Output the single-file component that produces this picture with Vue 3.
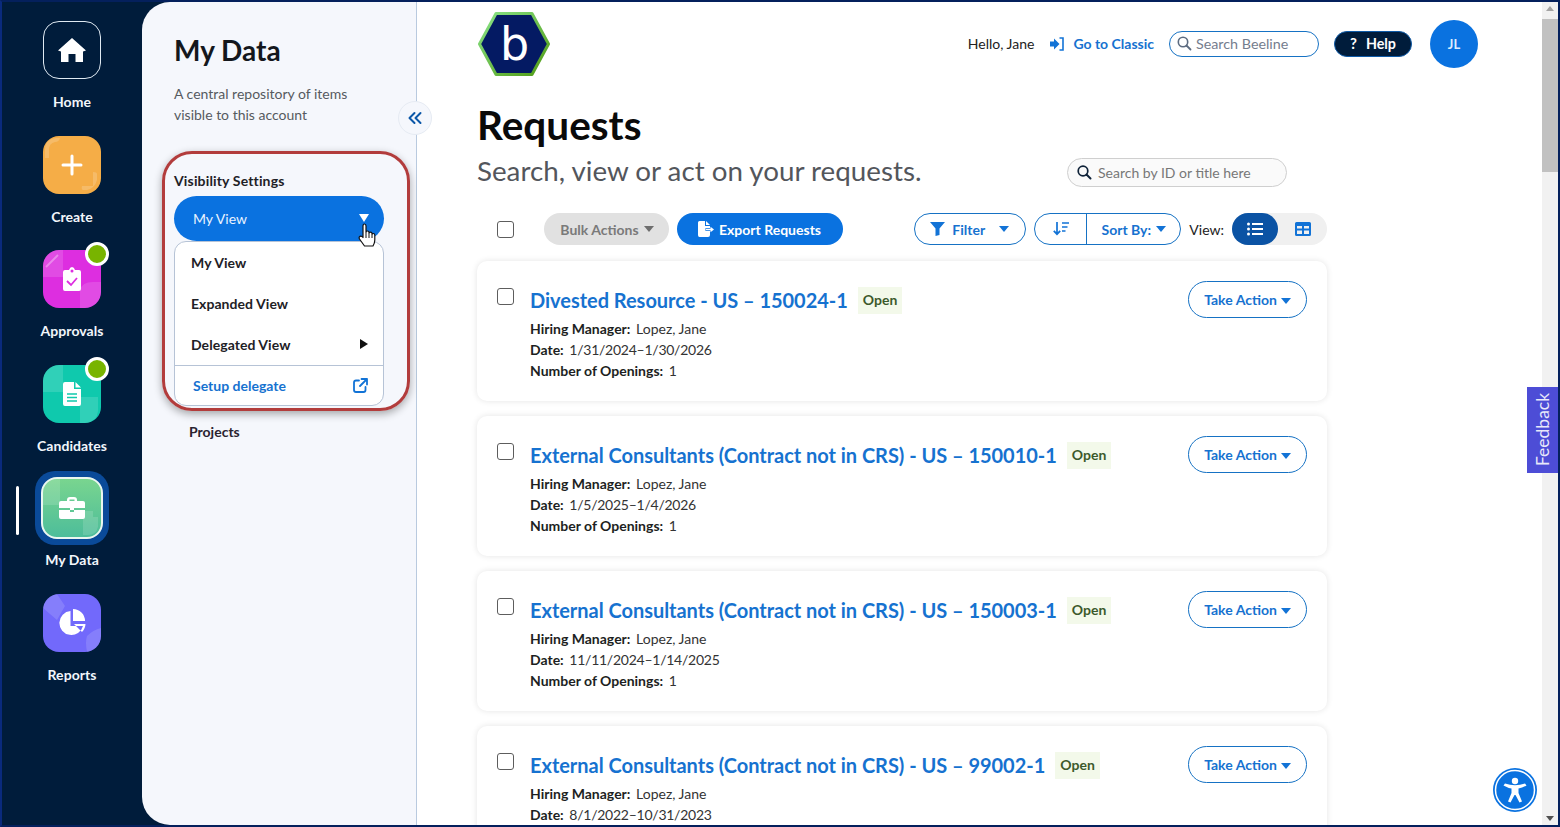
<script setup>
const cards = [
  { title: 'Divested Resource - US – 150024-1', date: '1/31/2024–1/30/2026', openings: true },
  { title: 'External Consultants (Contract not in CRS) - US – 150010-1', date: '1/5/2025–1/4/2026', openings: true },
  { title: 'External Consultants (Contract not in CRS) - US – 150003-1', date: '11/11/2024–1/14/2025', openings: true },
  { title: 'External Consultants (Contract not in CRS) - US – 99002-1', date: '8/1/2022–10/31/2023', openings: false },
]
</script>

<template>
  <div class="frame">
    <nav class="rail">
      <div class="nav-item">
        <div class="tile tile-home">
          <svg width="30" height="26" viewBox="0 0 30 26"><path fill="#fff" d="M15 1 L29 13.500 L26 14.500 L26 25 L18.500 25 L18.500 17 L11.500 17 L11.500 25 L4 25 L4 14.500 L1 13.500 Z"/></svg>
        </div>
        <span class="nav-label">Home</span>
      </div>
      <div class="nav-item">
        <div class="tile tile-create">
          <svg class="deco" width="58" height="58" viewBox="0 0 58 58"><path fill="#ffffff2e" d="M2 22V14Q2 3 13 2H17Q16 6 12 6 6 7 6 14V22Z M39 50H50V36Q54 36 54 38V44Q52 52 44 54H40Q38 53 39 50Z"/></svg>
          <svg width="22" height="22" viewBox="0 0 22 22"><path stroke="#fff" stroke-width="3" stroke-linecap="round" d="M11 2V20M2 11H20"/></svg>
        </div>
        <span class="nav-label">Create</span>
      </div>
      <div class="nav-item">
        <div class="tile tile-approvals">
          <svg class="deco" width="58" height="58" viewBox="0 0 58 58"><path fill="#ffffff24" d="M0 14Q1 1 14 0H20V27H0Z M37 40Q39 32 50 32H58V44Q56 56 44 58H37Z"/><path stroke="#ffffff55" stroke-width="2" d="M3 17L15 5"/></svg>
          <svg width="18" height="24" viewBox="0 0 18 24"><path fill="#fff" d="M2 3H6Q7 0 9 0T12 3H16Q18 3 18 5V22Q18 24 16 24H2Q0 24 0 22V5Q0 3 2 3Z"/><circle cx="9" cy="4" r="1.500" fill="#dd2ee0"/><path fill="none" stroke="#dd2ee0" stroke-width="1.800" d="M4 14L8 18L14 11"/></svg>
        </div>
        <span class="badge"></span>
        <span class="nav-label">Approvals</span>
      </div>
      <div class="nav-item">
        <div class="tile tile-candidates">
          <svg class="deco" width="58" height="58" viewBox="0 0 58 58"><path fill="#ffffff24" d="M0 14Q1 1 14 0H20V27H0Z M37 32H55V46Q54 56 44 58H37Z"/></svg>
          <svg width="18" height="24" viewBox="0 0 18 24"><path fill="#fff" d="M2 0H11V7H18V22Q18 24 16 24H2Q0 24 0 22V2Q0 0 2 0Z M12.500 0L18 5.500H12.500Z"/><path stroke="#10c9ac" stroke-width="1.400" d="M4 12H14M4 15.500H14M4 19H14"/></svg>
        </div>
        <span class="badge"></span>
        <span class="nav-label">Candidates</span>
      </div>
      <div class="nav-item">
        <span class="active-bar"></span>
        <div class="tile-ring">
          <div class="tile tile-data">
            <svg class="deco" width="58" height="58" viewBox="0 0 58 58"><path fill="#ffffff24" d="M0 10Q1 1 12 0H17V26H0Z M40 32H50V38H55V48Q53 56 45 56H40Z"/></svg>
            <svg width="26" height="22" viewBox="0 0 26 22"><path fill="#fff" d="M8 3Q8 0 11 0H15Q18 0 18 3V4H24Q26 4 26 6V11H15V13H11V11H0V6Q0 4 2 4H8ZM10.500 4H15.500V2.500H10.500ZM0 13H11V15H15V13H26V20Q26 22 24 22H2Q0 22 0 20Z"/></svg>
          </div>
        </div>
        <span class="nav-label">My Data</span>
      </div>
      <div class="nav-item">
        <div class="tile tile-reports">
          <svg class="deco" width="58" height="58" viewBox="0 0 58 58"><path fill="#ffffff24" d="M0 14L14 26L22 12L14 0Q1 1 0 14Z M44 42Q50 36 58 34V46Q56 57 44 58Q42 48 44 42Z"/></svg>
          <svg width="27" height="27" viewBox="0 0 27 27"><path fill="#fff" d="M11.500 2A12 12 0 1 0 24 17H11.500Z M14 0A12 12 0 0 1 26 12H14Z M15 15H26.500A12 12 0 0 1 23 23Z"/></svg>
        </div>
        <span class="nav-label">Reports</span>
      </div>
    </nav>

    <aside class="panel">
      <h2 class="panel-title">My Data</h2>
      <p class="panel-desc">A central repository of items<br>visible to this account</p>
      <button class="collapse" aria-label="Collapse">
        <svg width="14" height="14" viewBox="0 0 14 14"><path fill="none" stroke="#0b57a8" stroke-width="2" stroke-linecap="round" stroke-linejoin="round" d="M6.500 2L1.500 7L6.500 12M12.500 2L7.500 7L12.500 12"/></svg>
      </button>
      <div class="highlight">
        <div class="vis-label">Visibility Settings</div>
        <div class="vis-btn">
          <span>My View</span>
          <span class="vis-caret"></span>
          <svg class="hand" width="18" height="24" viewBox="0 0 18 24"><path fill="#fff" stroke="#111" stroke-width="1.200" stroke-linejoin="round" d="M5 13V3Q5 1 6.500 1T8 3V9.500Q8 8 9.500 8T11 9.500V10.500Q11 9.200 12.500 9.200T14 10.500V11.500Q14 10.500 15.300 10.500T16.800 12V17Q16.800 20 15 23H6.500L1.500 16Q0.500 14.200 2 13.400T5 14.500Z"/><path stroke="#111" stroke-width="1" d="M8 10V15M11 11V15M14 12V15"/></svg>
        </div>
        <div class="vis-menu">
          <div class="vis-item">My View</div>
          <div class="vis-item">Expanded View</div>
          <div class="vis-item vis-sub">Delegated View<span class="tri-right"></span></div>
          <div class="vis-setup">
            <span>Setup delegate</span>
            <svg width="15" height="15" viewBox="0 0 15 15"><path fill="none" stroke="#1273d6" stroke-width="1.800" stroke-linecap="round" stroke-linejoin="round" d="M6 2.500H3Q1 2.500 1 4.500V12Q1 14 3 14H10.500Q12.500 14 12.500 12V9M8.500 1H14V6.500M14 1L7 8"/></svg>
          </div>
        </div>
      </div>
      <div class="projects">Projects</div>
    </aside>

    <main class="main">
      <header class="topbar">
        <svg class="logo" width="72" height="64" viewBox="0 0 72 64">
          <defs>
            <linearGradient id="hexg" x1="0" y1="0" x2="1" y2="1"><stop offset="0" stop-color="#8be58a"/><stop offset="1" stop-color="#4f9a12"/></linearGradient>
          </defs>
          <path fill="#041a63" stroke="url(#hexg)" stroke-width="3" stroke-linejoin="round" d="M18 1.500H54L70.500 32L54 62.500H18L1.500 32Z"/>
          <text x="36.500" y="48" text-anchor="middle" fill="#fff" font-family="'DejaVu Sans', sans-serif" font-size="46">b</text>
        </svg>
        <div class="top-right">
          <span class="hello">Hello, Jane</span>
          <svg class="classic-icon" width="14" height="14" viewBox="0 0 14 14"><path fill="#1273d6" d="M0 4.500H4V1.500L9.500 7L4 12.500V9.500H0Z"/><path fill="none" stroke="#1273d6" stroke-width="1.600" d="M9.500 1H13V13H9.500"/></svg>
          <a class="classic">Go to Classic</a>
          <div class="top-search">
            <svg width="15" height="15" viewBox="0 0 15 15"><circle cx="6" cy="6" r="4.700" fill="none" stroke="#5c6b80" stroke-width="1.600"/><path stroke="#5c6b80" stroke-width="1.800" stroke-linecap="round" d="M9.500 9.500L13.500 13.500"/></svg>
            <span>Search Beeline</span>
          </div>
          <div class="help"><span class="q">?</span>Help</div>
          <div class="avatar">JL</div>
        </div>
      </header>

      <h1 class="page-title">Requests</h1>
      <div class="subrow">
        <div class="subtitle">Search, view or act on your requests.</div>
        <div class="req-search">
          <svg width="15" height="15" viewBox="0 0 15 15"><circle cx="6" cy="6" r="4.800" fill="none" stroke="#0f2238" stroke-width="1.700"/><path stroke="#0f2238" stroke-width="2" stroke-linecap="round" d="M9.500 9.500L13.500 13.500"/></svg>
          <span>Search by ID or title here</span>
        </div>
      </div>

      <div class="toolbar">
        <span class="check check-tool"></span>
        <div class="bulk">Bulk Actions<span class="caret caret-gray"></span></div>
        <div class="export">
          <svg width="16" height="16" viewBox="0 0 16 16"><path fill="#fff" d="M1.500 0H7V5H12V7H7.500V10H12V14Q12 16 10 16H1.500Q0 16 0 14V1.500Q0 0 1.500 0ZM8 0L12 4H8Z"/><path fill="#fff" d="M8 7.800H12.500V5.800L16 8.500L12.500 11.200V9.200H8Z"/></svg>
          Export Requests
        </div>
        <div class="spacer"></div>
        <div class="filter">
          <svg width="15" height="14" viewBox="0 0 15 14"><path fill="#1273d6" d="M0 0H15L9.500 6.500V13L5.500 14V6.500Z"/></svg>
          <span>Filter</span>
          <span class="caret caret-blue"></span>
        </div>
        <div class="sort">
          <div class="sort-icon">
            <svg width="16" height="14" viewBox="0 0 16 14"><path fill="none" stroke="#1273d6" stroke-width="1.700" d="M4 0V12M0.800 8.800L4 12.200L7.200 8.800M9 1H16M9 5H14.500M9 9H12.500"/></svg>
          </div>
          <div class="sort-by">Sort By:<span class="caret caret-blue"></span></div>
        </div>
        <span class="view-label">View:</span>
        <div class="view-toggle">
          <div class="view-on">
            <svg width="16" height="14" viewBox="0 0 16 14"><path fill="#fff" d="M5 1H16V3H5ZM5 6H16V8H5ZM5 11H16V13H5Z"/><circle cx="1.500" cy="2" r="1.500" fill="#fff"/><circle cx="1.500" cy="7" r="1.500" fill="#fff"/><circle cx="1.500" cy="12" r="1.500" fill="#fff"/></svg>
          </div>
          <div class="view-off">
            <svg width="16" height="14" viewBox="0 0 16 14"><path fill="#1273d6" d="M1.500 0H14.500Q16 0 16 1.500V12.500Q16 14 14.500 14H1.500Q0 14 0 12.500V1.500Q0 0 1.500 0ZM2 4V6.500H7V4ZM9 4V6.500H14V4ZM2 8.500V12H7V8.500ZM9 8.500V12H14V8.500Z"/></svg>
          </div>
        </div>
      </div>

      <div class="cards">
        <article v-for="c in cards" :key="c.title" class="card">
          <span class="check"></span>
          <div class="card-body">
            <div class="card-head">
              <a class="card-title">{{ c.title }}</a>
              <span class="open">Open</span>
            </div>
            <div class="meta"><b>Hiring Manager:</b> Lopez, Jane</div>
            <div class="meta"><b>Date:</b> <span class="date">{{ c.date }}</span></div>
            <div v-if="c.openings" class="meta"><b>Number of Openings:</b> 1</div>
          </div>
          <div class="take">Take Action<span class="caret caret-blue caret-sm"></span></div>
        </article>
      </div>

      <button class="a11y" aria-label="Accessibility">
        <svg width="44" height="44" viewBox="0 0 44 44"><circle cx="22" cy="22" r="19.500" fill="none" stroke="#fff" stroke-width="1.500"/><circle cx="22" cy="13" r="3.200" fill="#fff"/><path fill="#fff" d="M10.500 17.500L12 15.600Q22 19 32 15.600L33.500 17.500Q29 20 25.500 20.500V25L29 33.500L26.500 34.500L22.500 27H21.500L17.500 34.500L15 33.500L18.500 25V20.500Q15 20 10.500 17.500Z"/></svg>
      </button>
    </main>

    <div class="scrollbar">
      <span class="arrow arrow-up"></span>
      <div class="thumb"></div>
      <div class="track"></div>
      <span class="arrow arrow-down"></span>
    </div>
    <div class="feedback"><span>Feedback</span></div>
  </div>
</template>

<style scoped>
* { box-sizing: border-box; }
.frame {
  width: 1560px; height: 827px; display: flex; overflow: hidden; position: relative;
  border: 2px solid #04205c; border-left-color: #0a2a7c; background: #001c3b;
  font-family: Lato, sans-serif; color: #111;
}
.rail { width: 140px; flex: none; background: #001c3b; padding-top: 19px; display: flex; flex-direction: column; }
.nav-item { height: 114.6px; flex: none; position: relative; display: flex; flex-direction: column; align-items: center; }
.tile { width: 58px; height: 58px; border-radius: 16px; position: relative; display: flex; align-items: center; justify-content: center; flex: none; overflow: hidden; }
.deco { position: absolute; left: 0; top: 0; }
.tile-home { border: 1px solid #dfe9f2; }
.tile-create { background: #f5ad47; }
.tile-approvals { background: #dd2ee0; }
.tile-candidates { background: #0fc9ad; }
.tile-reports { background: #7269fb; }
.tile-data { background: linear-gradient(#79d58f, #4dbd9a); border: 2px solid #eaf6f0; width: 62px; height: 62px; border-radius: 16px; }
.tile-ring { width: 74px; height: 74px; margin-top: -8px; margin-bottom: -6px; background: #0a4a99; border-radius: 20px; display: flex; align-items: center; justify-content: center; flex: none; }
.nav-label { color: #f2f6fb; font-size: 14px; font-weight: 700; line-height: 18px; margin-top: 14px; letter-spacing: 0.05px; }
.tile-ring + .nav-label { margin-top: 12px; }
.badge { position: absolute; left: 83px; top: -8px; width: 24px; height: 24px; border-radius: 50%; background: #78b400; border: 3px solid #fff; }
.active-bar { position: absolute; left: 14px; top: 7px; width: 3px; height: 49px; background: #fff; border-radius: 2px; }

.panel { width: 275px; flex: none; background: #f5f7fc; border-right: 1px solid #b9cadf; border-radius: 28px 0 0 28px; position: relative; padding: 29px 0 0 20px; }
.panel-title { margin: 0 0 0 12px; font-size: 28px; line-height: 38px; font-weight: 700; color: #14171c; }
.panel-desc { margin: 14px 0 0 12px; font-size: 14px; line-height: 21px; color: #555a60; }
.collapse { position: absolute; right: -16px; top: 99px; width: 34px; height: 34px; border-radius: 50%; border: 1px solid #e6ebf3; background: #f5f7fc; display: flex; align-items: center; justify-content: center; padding: 0; z-index: 3; }
.highlight { width: 248px; height: 260px; margin-top: 26px; border: 3px solid #b23c3c; border-radius: 30px; padding: 18px 0 0 9px; box-shadow: 0 3px 8px #0005; }
.vis-label { font-size: 14px; line-height: 18px; font-weight: 700; color: #1e2126; letter-spacing: 0.15px; }
.vis-btn { width: 210px; height: 45px; margin-top: 6px; background: #0a72e0; border-radius: 23px; color: #e9f3ff; font-size: 14px; display: flex; align-items: center; justify-content: space-between; padding: 0 15px 0 19px; position: relative; }
.vis-caret { border: 5px solid transparent; border-top: 8px solid #fff; border-bottom: 0; margin-top: -2px; }
.hand { position: absolute; right: 8px; top: 27px; }
.vis-menu { width: 210px; height: 165px; background: #fff; border: 1px solid #b6c3d6; border-radius: 12px; font-size: 14px; }
.vis-item { height: 41px; display: flex; align-items: center; padding: 0 16px; font-weight: 700; color: #1e2126; letter-spacing: 0.05px; }
.vis-sub { justify-content: space-between; height: 41px; padding-right: 15px; }
.tri-right { border: 5px solid transparent; border-left: 8px solid #111; border-right: 0; margin-top: -2px; }
.vis-setup { border-top: 1px solid #b6c3d6; height: 40px; display: flex; align-items: center; justify-content: space-between; padding: 0 15px 0 18px; color: #1672d0; font-weight: 700; font-size: 14px; }
.projects { margin: 12px 0 0 27px; font-size: 14px; line-height: 18px; font-weight: 700; color: #2a2430; }

.main { flex: 1; min-width: 0; background: #fff; padding-left: 60px; position: relative; overflow: hidden; }
.topbar { height: 98px; display: flex; align-items: flex-start; padding-top: 10px; width: 1001px; }
.logo { margin-left: 1px; }
.top-right { margin-left: auto; display: flex; align-items: center; height: 48px; margin-top: 8px; font-size: 14px; }
.hello { color: #222; margin-right: 16px; padding-bottom: 2px; }
.classic-icon { margin-right: 9px; }
.classic { color: #1672d0; font-weight: 700; margin-right: 15px; padding-bottom: 2px; }
.top-search { width: 150px; height: 26px; border: 1px solid #1672c4; border-radius: 13px; display: flex; align-items: center; gap: 4px; padding: 0 0 2px 7px; color: #747d8e; margin-right: 15px; font-size: 14.3px; }
.help { width: 78px; height: 26px; border-radius: 13px; background: #001c3b; border: 1px solid #0d5aa8; color: #fff; font-weight: 700; font-size: 14.3px; display: flex; align-items: center; justify-content: center; padding-bottom: 2px; }
.q { margin-right: 9px; font-size: 15px; }
.avatar { width: 48px; height: 48px; border-radius: 50%; background: #0a72e0; color: #dcecff; font-size: 13px; font-weight: 700; display: flex; align-items: center; justify-content: center; margin-left: 18px; }
.page-title { margin: 0; font-size: 40.5px; line-height: 50px; font-weight: 700; color: #0a0a0a; }
.subrow { display: flex; align-items: center; height: 40px; margin-top: 1px; }
.subtitle { font-size: 27.75px; line-height: 40px; color: #53565c; width: 590px; }
.req-search { width: 220px; height: 29px; margin-top: 2px; border: 1px solid #cfcfcf; background: #fafafa; border-radius: 15px; display: flex; align-items: center; gap: 6px; padding-left: 9px; font-size: 14px; color: #777; }
.toolbar { display: flex; align-items: center; height: 32px; margin-top: 22px; width: 850px; font-size: 14px; font-weight: 700; }
.check { width: 17px; height: 17px; border: 1px solid #5d5d5d; border-radius: 3px; background: #fff; flex: none; display: block; }
.check-tool { margin: 0 30px 0 20px; }
.bulk { width: 125px; height: 32px; background: #e1e1e1; color: #7a7a7a; border-radius: 16px; display: flex; align-items: center; justify-content: center; gap: 5px; margin-right: 8px; padding-left: 1px; }
.caret { display: inline-block; border: 5px solid transparent; border-top: 6px solid currentColor; border-bottom: 0; }
.caret-gray { color: #6e6e6e; }
.caret-blue { color: #1273d6; }
.export { width: 166px; height: 32px; background: #0a72e0; color: #fff; border-radius: 16px; display: flex; align-items: center; justify-content: center; gap: 5px; padding-right: 1px; }
.spacer { flex: 1; }
.filter { width: 112px; height: 32px; border: 1px solid #1672c4; border-radius: 16px; color: #1672d0; display: flex; align-items: center; padding-left: 15px; gap: 7px; margin-right: 8px; }
.filter .caret { margin-left: 7px; }
.sort { width: 147px; height: 32px; border: 1px solid #1672c4; border-radius: 16px; display: flex; color: #1672d0; margin-right: 8px; }
.sort-icon { width: 52px; border-right: 1px solid #1672c4; display: flex; align-items: center; justify-content: center; }
.sort-by { flex: 1; display: flex; align-items: center; justify-content: center; gap: 5px; }
.view-label { font-weight: 400; color: #222; margin-right: 8px; }
.view-toggle { width: 95px; height: 32px; background: #f0f0f0; border-radius: 16px; display: flex; align-items: center; }
.view-on { width: 46px; height: 32px; background: #0b53a4; border-radius: 16px; display: flex; align-items: center; justify-content: center; }
.view-off { flex: 1; display: flex; align-items: center; justify-content: center; }
.cards { margin-top: 16px; width: 850px; display: flex; flex-direction: column; gap: 15px; }
.card { height: 140px; flex: none; background: #fff; border-radius: 10px; box-shadow: 0 0 6px #0000001c; display: flex; padding: 27px 20px 0 20px; }
.card-body { flex: 1; margin-left: 16px; margin-top: -1px; }
.card-head { display: flex; align-items: center; height: 26px; margin-bottom: 5px; }
.card-title { color: #1672d0; font-size: 20px; font-weight: 700; letter-spacing: -0.03px; }
.open { margin-left: 10px; background: #f3f9ea; color: #3c5a2c; font-size: 14px; font-weight: 700; height: 27px; padding: 0 5px 2px; display: flex; align-items: center; }
.meta { font-size: 14px; line-height: 21px; color: #333; }
.meta b { color: #1d1f22; margin-right: 2px; }
.date { letter-spacing: -0.25px; }
.take { width: 119px; height: 37px; margin-top: -7px; border: 1px solid #1672c4; border-radius: 19px; color: #1672d0; font-size: 14px; font-weight: 700; display: flex; align-items: center; justify-content: center; gap: 4px; }
.caret-sm { margin-top: 2px; }
.feedback { position: absolute; right: 0; top: 385px; width: 31px; height: 86px; background: #4d4dd6; color: #e8e8fa; display: flex; align-items: center; justify-content: center; padding-bottom: 2px; z-index: 5; }
.feedback span { transform: rotate(-90deg); font-size: 17.5px; white-space: nowrap; }
.a11y { position: absolute; left: 1076px; top: 766px; width: 44px; height: 44px; border-radius: 50%; border: 0; padding: 0; background: #0a72e0; display: block; }
.scrollbar { width: 16px; flex: none; background: #f1f1f1; display: flex; flex-direction: column; align-items: center; }
.arrow { flex: none; border: 4px solid transparent; margin: 4px 0; }
.arrow-up { border-bottom: 5px solid #a3a3a3; border-top: 0; }
.arrow-down { border-top: 5px solid #505050; border-bottom: 0; }
.thumb { width: 16px; height: 153px; flex: none; background: #c1c1c1; margin-top: 4px; }
.track { flex: 1; }
</style>

<style>
html, body { margin: 0; overflow: hidden; }
</style>
